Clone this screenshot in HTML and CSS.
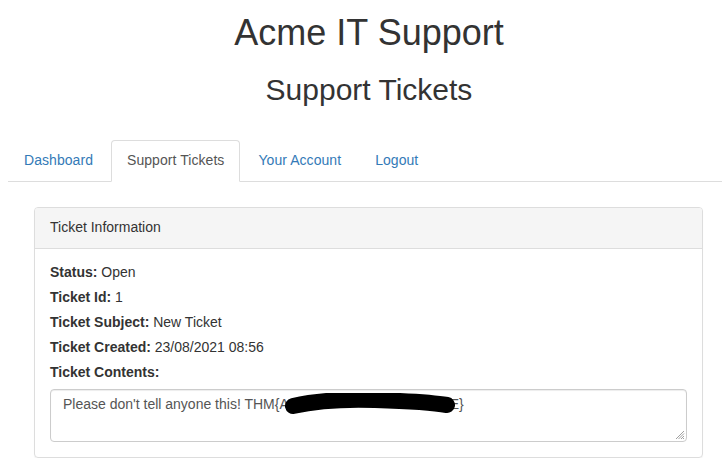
FILE: index.html
```html
<!DOCTYPE html>
<html>
<head>
<meta charset="utf-8">
<title>Acme IT Support</title>
<link rel="stylesheet" href="styles.css">
</head>
<body>
<div class="page">
<h1 class="title">Acme IT Support</h1>
<h2 class="subtitle">Support Tickets</h2>
<ul class="tabs">
  <li><a href="#">Dashboard</a></li>
  <li class="active"><a href="#">Support Tickets</a></li>
  <li><a href="#">Your Account</a></li>
  <li><a href="#">Logout</a></li>
</ul>
<div class="panel">
  <div class="panel-heading">Ticket Information</div>
  <div class="panel-body">
    <div class="row"><b>Status:</b> Open</div>
    <div class="row"><b>Ticket Id:</b> 1</div>
    <div class="row"><b>Ticket Subject:</b> New Ticket</div>
    <div class="row"><b>Ticket Created:</b> 23/08/2021 08:56</div>
    <div class="row"><b>Ticket Contents:</b></div>
    <div class="textbox">Please don't tell anyone this! THM{A<span class="redact"><svg width="170" height="22" viewBox="0 0 170 22"><path d="M8 13 C 30 8, 60 6, 90 7 C 120 8, 145 9, 162 12" fill="none" stroke="#000" stroke-width="16" stroke-linecap="round"/></svg></span>E}<svg class="grip" width="10" height="10" viewBox="0 0 10 10"><path d="M9 1 L1 9 M9 3.5 L3.5 9 M9 6 L6 9 M9 8 L8 9" stroke="#888" stroke-width="0.8"/></svg></div>
  </div>
</div>
</div>
</body>
</html>
```
FILE: styles.css
```css
html, body {
  margin: 0;
  padding: 0;
  background: #fff;
}
body {
  font-family: "Liberation Sans", Arial, sans-serif;
  font-size: 14px;
  line-height: 20px;
  color: #333;
  overflow: hidden;
}
.page {
  margin-left: 8px;
  width: 722px;
}
.title {
  margin: 13px 0 10px;
  font-size: 36px;
  line-height: 1.1;
  font-weight: 500;
  text-align: center;
}
.subtitle {
  margin: 20px 0 0;
  font-size: 30px;
  line-height: 1.1;
  font-weight: 500;
  text-align: center;
}
.tabs {
  list-style: none;
  margin: 34px 0 0;
  padding: 0;
  display: flex;
  border-bottom: 1px solid #ddd;
}
.tabs li {
  margin-bottom: -1px;
}
.tabs a {
  display: block;
  padding: 9px 15px 11px;
  margin-right: 2px;
  line-height: 20px;
  letter-spacing: 0.06px;
  border: 1px solid transparent;
  border-radius: 4px 4px 0 0;
  color: #337ab7;
  text-decoration: none;
}
.tabs .active a {
  color: #555;
  background: #fff;
  border-color: #ddd #ddd transparent;
}
.panel {
  margin: 25px 0 0 26px;
  width: 669px;
  box-sizing: border-box;
  border: 1px solid #ddd;
  border-radius: 4px;
  box-shadow: 0 1px 1px rgba(0,0,0,.05);
}
.panel-heading {
  padding: 9px 15px 11px;
  background: #f5f5f5;
  border-bottom: 1px solid #ddd;
  border-radius: 3px 3px 0 0;
  color: #333;
}
.panel-body {
  padding: 13px 15px 15px;
}
.row {
  margin-bottom: 5px;
}
.row b {
  font-weight: bold;
}
.textbox {
  position: relative;
  margin-top: 7px;
  height: 53px;
  box-sizing: border-box;
  padding: 4px 12px 8px;
  border: 1px solid #ccc;
  border-radius: 4px;
  box-shadow: inset 0 1px 1px rgba(0,0,0,.075);
  color: #555;
  white-space: nowrap;
}
.redact {
  display: inline-block;
  width: 170px;
  height: 20px;
  margin: 0 -5px 0 -4px;
  vertical-align: top;
  position: relative;
}
.redact svg {
  display: block;
  margin-top: -1px;
}
.grip {
  position: absolute;
  right: 1px;
  bottom: 1px;
}
```
